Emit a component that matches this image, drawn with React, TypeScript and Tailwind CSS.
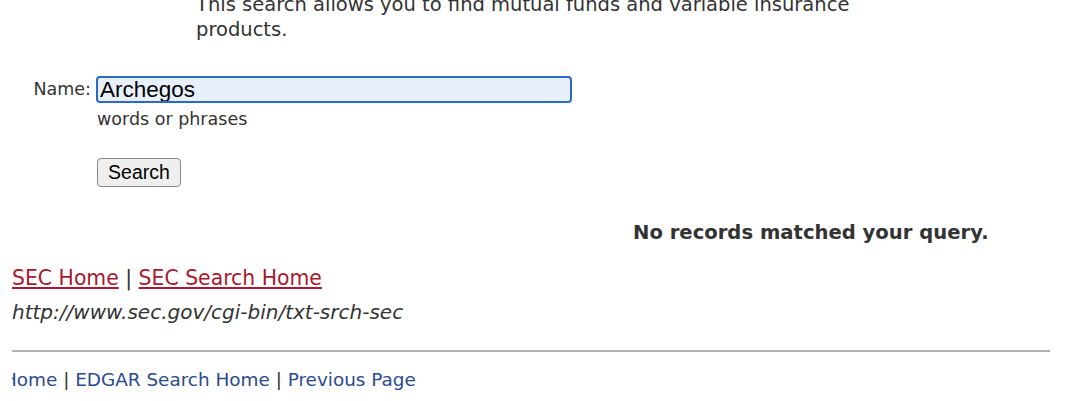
export default function App() {
  return (
    <div className="w-[1080px] h-[401px] overflow-hidden bg-white text-[#333] font-['DejaVu_Sans',Verdana,sans-serif] text-[20px]">
      <p className="ml-[196px] mt-[-8px] text-[19.5px] leading-[25px] w-[700px]">
        This search allows you to find mutual funds and variable insurance products.
      </p>

      <div className="mt-[34px] flex items-start">
        <span className="w-[92px] pr-[1px] text-right text-[17.5px] leading-[27px]">Name:</span>
        <div className="ml-[4px] flex flex-col">
          <input
            defaultValue="Archegos"
            className="w-[476px] h-[27px] rounded-[4px] border-2 border-[#2a6ac8] bg-[#e8f0fe] px-[2px] text-black font-['Liberation_Sans',Arial,sans-serif] text-[22.5px] leading-[23px] outline-none"
          />
          <span className="ml-[1px] mt-[6px] text-[17.5px] leading-[20px]">words or phrases</span>
          <div className="mt-[28px]">
            <button className="ml-[1px] w-[84px] h-[29px] rounded-[4px] border border-[#888] bg-[#efefef] text-black font-['Liberation_Sans',Arial,sans-serif] text-[19.5px] leading-[22px]">
              Search
            </button>
          </div>
        </div>
      </div>

      <div className="mt-[34px] ml-[633px] font-bold text-[19.6px] leading-[24px]">No records matched your query.</div>

      <div className="mt-[21px] ml-[12px] text-[20.4px] leading-[24px]">
        <a href="#" className="text-[#a6192e] underline">SEC Home</a>
        <span> | </span>
        <a href="#" className="text-[#a6192e] underline">SEC Search Home</a>
      </div>

      <div className="mt-[10px] ml-[12px] italic leading-[24px]">http://www.sec.gov/cgi-bin/txt-srch-sec</div>

      <hr className="mt-[26px] ml-[12px] w-[1038px] border-0 border-t-2 border-[#b0b0b0]" />

      <div className="mt-[16px] ml-[12px] w-[600px] overflow-hidden text-[18.4px] leading-[24px]">
        <div className="ml-[-9px] whitespace-nowrap">
          <a href="#" className="text-[#2c4a8f]">Home</a>
          <span> | </span>
          <a href="#" className="text-[#2c4a8f]">EDGAR Search Home</a>
          <span> | </span>
          <a href="#" className="text-[#2c4a8f]">Previous Page</a>
        </div>
      </div>
    </div>
  );
}
